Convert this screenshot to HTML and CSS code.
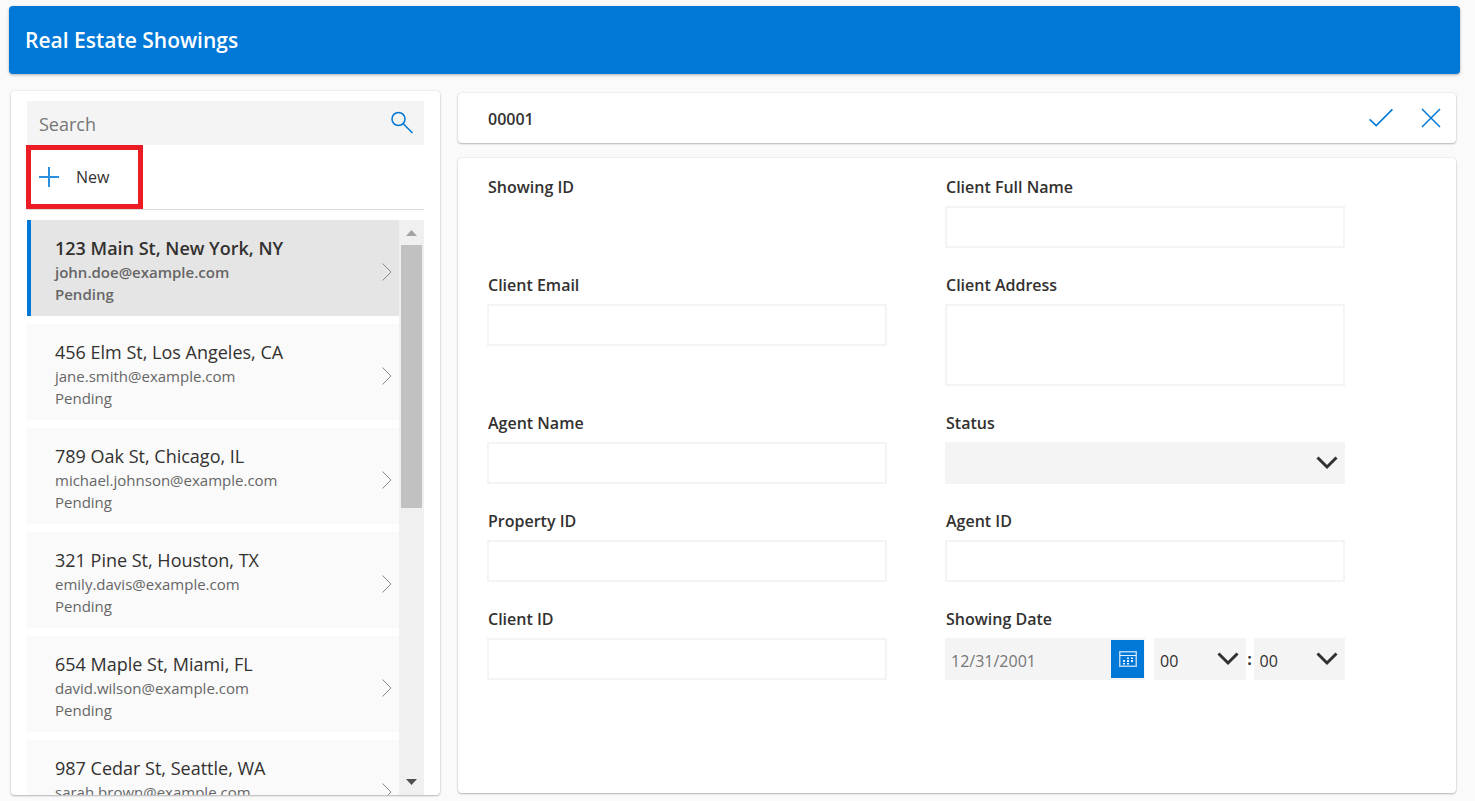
FILE: index.html
```html
<!DOCTYPE html>
<html lang="en">
<head>
<meta charset="utf-8">
<title>Real Estate Showings</title>
<link rel="stylesheet" href="styles.css">
</head>
<body>
<div class="app">
  <header class="banner"><h1 class="banner-title">Real Estate Showings</h1></header>
  <main class="workspace">
    <aside class="card sidebar">
      <div class="search">
        <input class="search-input" type="search" placeholder="Search" aria-label="Search">
        <button class="icon-button" type="button" aria-label="Run search">
          <svg class="icon" width="24" height="24" viewBox="0 0 24 24"><circle cx="8.500" cy="8" r="6.500"/><path d="M13.200 12.700 22.500 22"/></svg>
        </button>
      </div>
      <div class="toolbar">
        <button class="new-button" type="button">
          <svg class="icon icon-plus" width="20" height="20" viewBox="0 0 20 20"><path d="M0 10H20M10 0V20"/></svg>
          New
        </button>
      </div>
      <div class="gallery">
        <ul class="gallery-list">
          <li class="item item-selected"><div class="item-text"><span class="item-title">123 Main St, New York, NY</span><span class="item-line">john.doe@example.com</span><span class="item-line">Pending</span></div><svg class="item-arrow" width="10" height="18" viewBox="0 0 10 18"><path d="M.5 .5 9 9 .5 17.5"/></svg></li>
          <li class="item"><div class="item-text"><span class="item-title">456 Elm St, Los Angeles, CA</span><span class="item-line">jane.smith@example.com</span><span class="item-line">Pending</span></div><svg class="item-arrow" width="10" height="18" viewBox="0 0 10 18"><path d="M.5 .5 9 9 .5 17.5"/></svg></li>
          <li class="item"><div class="item-text"><span class="item-title">789 Oak St, Chicago, IL</span><span class="item-line">michael.johnson@example.com</span><span class="item-line">Pending</span></div><svg class="item-arrow" width="10" height="18" viewBox="0 0 10 18"><path d="M.5 .5 9 9 .5 17.5"/></svg></li>
          <li class="item"><div class="item-text"><span class="item-title">321 Pine St, Houston, TX</span><span class="item-line">emily.davis@example.com</span><span class="item-line">Pending</span></div><svg class="item-arrow" width="10" height="18" viewBox="0 0 10 18"><path d="M.5 .5 9 9 .5 17.5"/></svg></li>
          <li class="item"><div class="item-text"><span class="item-title">654 Maple St, Miami, FL</span><span class="item-line">david.wilson@example.com</span><span class="item-line">Pending</span></div><svg class="item-arrow" width="10" height="18" viewBox="0 0 10 18"><path d="M.5 .5 9 9 .5 17.5"/></svg></li>
          <li class="item"><div class="item-text"><span class="item-title">987 Cedar St, Seattle, WA</span><span class="item-line">sarah.brown@example.com</span><span class="item-line">Pending</span></div><svg class="item-arrow" width="10" height="18" viewBox="0 0 10 18"><path d="M.5 .5 9 9 .5 17.5"/></svg></li>
        </ul>
        <div class="scrollbar" aria-hidden="true">
          <svg class="scroll-up" width="11" height="6" viewBox="0 0 11 6"><path d="M0 6 5.5 0 11 6z"/></svg>
          <div class="scroll-track"><div class="scroll-thumb"></div></div>
          <svg class="scroll-down" width="11" height="6" viewBox="0 0 11 6"><path d="M0 0H11L5.5 6z"/></svg>
        </div>
      </div>
    </aside>
    <section class="detail">
      <div class="card detail-bar">
        <h2 class="detail-title">00001</h2>
        <div class="actions">
          <button class="icon-button" type="submit" form="showing" aria-label="Save">
            <svg class="icon" width="24" height="20" viewBox="0 0 24 20"><path d="M.6 11.4 7.2 17.6 23.4 1.4"/></svg>
          </button>
          <button class="icon-button" type="reset" form="showing" aria-label="Cancel">
            <svg class="icon" width="20" height="20" viewBox="0 0 20 20"><path d="M1 1 19 19M19 1 1 19"/></svg>
          </button>
        </div>
      </div>
      <form class="card form" id="showing">
        <div class="field"><span class="label">Showing ID</span></div>
        <div class="field"><label class="label" for="client-name">Client Full Name</label><input class="box" id="client-name" type="text"></div>
        <div class="field"><label class="label" for="client-email">Client Email</label><input class="box" id="client-email" type="email"></div>
        <div class="field"><label class="label" for="client-address">Client Address</label><textarea class="box box-tall" id="client-address"></textarea></div>
        <div class="field"><label class="label" for="agent-name">Agent Name</label><input class="box" id="agent-name" type="text"></div>
        <div class="field"><label class="label" for="status">Status</label>
          <div class="select-wrap"><select class="select" id="status"><option></option></select><svg class="chevron" width="22" height="14" viewBox="0 0 22 14"><path d="M1.5 1.5 11 11 20.5 1.5"/></svg></div>
        </div>
        <div class="field"><label class="label" for="property-id">Property ID</label><input class="box" id="property-id" type="text"></div>
        <div class="field"><label class="label" for="agent-id">Agent ID</label><input class="box" id="agent-id" type="text"></div>
        <div class="field"><label class="label" for="client-id">Client ID</label><input class="box" id="client-id" type="text"></div>
        <div class="field"><label class="label" for="date">Showing Date</label>
          <div class="date-row">
            <div class="date-box">
              <input class="date-input" id="date" type="text" placeholder="12/31/2001">
              <button class="date-button" type="button" aria-label="Open calendar">
                <svg width="18" height="16" viewBox="0 0 18 16"><path class="cal-frame" d="M.75 .75H17.250V15.250H.75z"/><path class="cal-dots" d="M1 4h16v1H1zM8 6.500h2v1.500H8zM12 6.500h2v1.500h-2zM4 9h2v2H4zM8 9h2v2H8zM12 9h2v2h-2zM4 12h2v1.500H4zM8 12h2v1.500H8z"/></svg>
              </button>
            </div>
            <div class="select-wrap"><select class="select" aria-label="Hour"><option>00</option></select><svg class="chevron" width="22" height="14" viewBox="0 0 22 14"><path d="M1.5 1.5 11 11 20.5 1.5"/></svg></div>
            <span class="colon">:</span>
            <div class="select-wrap"><select class="select" aria-label="Minute"><option>00</option></select><svg class="chevron" width="22" height="14" viewBox="0 0 22 14"><path d="M1.5 1.5 11 11 20.5 1.5"/></svg></div>
          </div>
        </div>
      </form>
    </section>
  </main>
</div>
</body>
</html>
```
FILE: styles.css
```css
* { box-sizing: border-box; }
body {
  margin: 0;
  background: #fafafa;
  color: #323130;
  font-family: "Open Sans", "Noto Sans", sans-serif;
  font-size: 16px;
}
h1, h2, ul { margin: 0; padding: 0; }
button, input, select, textarea { font: inherit; color: inherit; border: 0; border-radius: 0; padding: 0; }
button { background: none; display: flex; align-items: center; justify-content: center; cursor: pointer; }
svg { display: block; flex: none; }

.app { display: flex; flex-direction: column; height: 100vh; padding: 6px 15px 6px 9px; }
.banner {
  display: flex;
  align-items: center;
  flex: none;
  height: 68px;
  padding: 0 16px;
  border-radius: 4px;
  background: #0078d7;
  color: #fff;
  box-shadow: 0 1px 3px rgba(0, 0, 0, .3);
}
.banner-title { font-size: 21px; font-weight: 600; line-height: 28px; }
.workspace {
  display: grid;
  grid-template-columns: 429px minmax(0, 1fr);
  grid-template-rows: minmax(0, 1fr);
  gap: 18px;
  flex: 1;
  min-height: 0;
  padding: 17px 4px 0 2px;
}
.card { background: #fff; border-radius: 4px; box-shadow: 0 1px 2px rgba(0, 0, 0, .25), 0 0 2px rgba(0, 0, 0, .12); }

.sidebar { display: flex; flex-direction: column; padding: 10px 16px 0; overflow: hidden; }
.search { display: flex; align-items: center; flex: none; height: 44px; padding: 0 10px 0 12px; background: #f4f4f4; }
.search-input { flex: 1; min-width: 0; padding-top: 2px; background: none; font-size: 18px; appearance: none; }
.search-input::placeholder { color: #767676; opacity: 1; }
.icon { fill: none; stroke: #0078d7; stroke-width: 1.5; }
.icon-plus { stroke: #2b8fde; stroke-width: 2; }
.toolbar { flex: none; height: 65px; border-bottom: 1px solid #dcdcdc; }
.new-button {
  justify-content: flex-start;
  gap: 17px;
  width: 117px;
  height: 64px;
  margin-left: -1px;
  padding-left: 8px;
  border: 5px solid #ed1c24;
}
.gallery { display: flex; flex: 1; min-height: 0; margin-top: 10px; }
.gallery-list { flex: 1; list-style: none; overflow: hidden; }
.item {
  display: flex;
  align-items: center;
  height: 96px;
  margin-bottom: 8px;
  padding: 8px 7px 0 24px;
  border-left: 4px solid #fafafa;
  background: #fafafa;
}
.item-text { display: flex; flex: 1; flex-direction: column; padding-bottom: 4px; }
.item-title { font-size: 18px; line-height: 26px; }
.item-line { font-size: 15px; line-height: 22px; color: #666; }
.item-selected { border-left-color: #0078d7; background: #e5e5e5; font-weight: 600; }
.item-arrow { fill: none; stroke: #8a8a8a; }
.scrollbar { display: flex; flex-direction: column; align-items: center; width: 25px; padding: 10px 0; background: #f0f0f0; }
.scroll-up { fill: #a3a3a3; }
.scroll-down { fill: #505050; }
.scroll-track { flex: 1; width: 21px; padding: 9px 0; }
.scroll-thumb { height: 50%; background: #c1c1c1; }

.detail { display: flex; flex-direction: column; gap: 15px; padding: 2px 0; }
.detail-bar { display: flex; flex: none; align-items: center; justify-content: space-between; height: 50px; padding: 0 15px 0 30px; }
.detail-title { padding-top: 2px; font-size: 16px; font-weight: 600; line-height: 24px; }
.actions { display: flex; gap: 28px; }
.form {
  display: grid;
  grid-template-columns: 1fr 1fr;
  align-content: start;
  gap: 24px 58px;
  flex: 1;
  padding: 16px 111px 0 29px;
}
.field { display: flex; flex-direction: column; gap: 6px; min-width: 0; }
.label { padding-left: 1px; font-weight: 600; line-height: 26px; }
.box { width: 100%; height: 42px; padding: 0 8px; border: 2px solid #f4f4f4; background: #fff; }
.box-tall { height: 82px; resize: none; }
.select-wrap { position: relative; flex: 1; min-width: 0; }
.select { display: block; width: 100%; height: 42px; padding: 4px 36px 0 6px; background: #f4f4f4; appearance: none; }
.chevron { position: absolute; top: 14px; right: 7px; fill: none; stroke: #323130; stroke-width: 3; pointer-events: none; }
.date-row { display: flex; }
.date-box { display: flex; flex: none; width: 50%; height: 42px; margin-right: 9px; padding: 2px 1px 2px 6px; background: #f4f4f4; }
.date-input { flex: 1; min-width: 0; padding-top: 4px; background: none; }
.date-input::placeholder { color: #767676; opacity: 1; }
.date-button { width: 33px; background: #0078d7; }
.cal-frame { fill: none; stroke: #b3d7f3; stroke-width: 1.5; }
.cal-dots { fill: #e5f1fb; }
.colon { width: 8px; font-weight: 700; line-height: 42px; text-align: center; }
```
